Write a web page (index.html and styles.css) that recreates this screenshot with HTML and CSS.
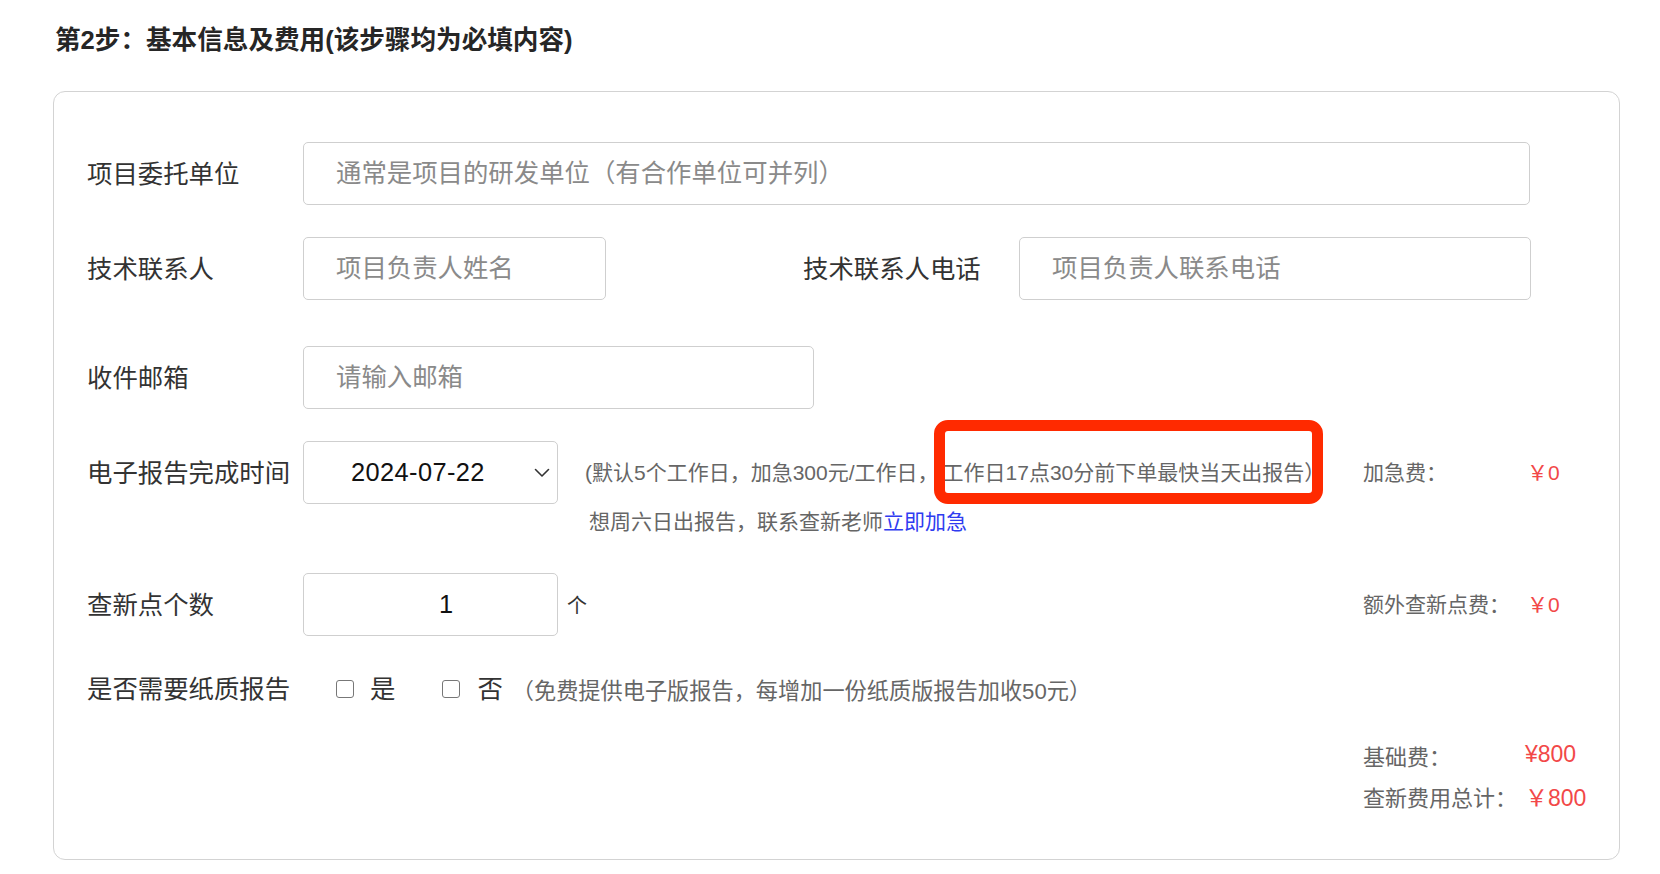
FILE: index.html
```html
<!DOCTYPE html>
<html lang="zh-CN">
<head>
<meta charset="utf-8">
<title>第2步：基本信息及费用</title>
<link rel="stylesheet" href="styles.css">
</head>
<body>
<div class="page">
  <h2 class="step-title">第2步：基本信息及费用(该步骤均为必填内容)</h2>
  <div class="card">
    <div class="row row-1">
      <label class="label">项目委托单位</label>
      <input class="field field-full" type="text" placeholder="通常是项目的研发单位（有合作单位可并列）">
    </div>
    <div class="row row-2">
      <label class="label">技术联系人</label>
      <input class="field field-name" type="text" placeholder="项目负责人姓名">
      <label class="label label-phone">技术联系人电话</label>
      <input class="field field-phone" type="text" placeholder="项目负责人联系电话">
    </div>
    <div class="row row-3">
      <label class="label">收件邮箱</label>
      <input class="field field-email" type="text" placeholder="请输入邮箱">
    </div>
    <div class="row row-4">
      <label class="label label-tall">电子报告完成时间</label>
      <div class="select">
        <span class="select-value">2024-07-22</span>
        <svg class="chevron" viewBox="0 0 16 10" width="16" height="10"><polyline points="1.5,1.5 8,8 14.5,1.5" fill="none" stroke="#333" stroke-width="1.6" stroke-linecap="round" stroke-linejoin="round"/></svg>
      </div>
      <div class="note-block">
        <p class="note-line">(默认5个工作日，加急300元/工作日，<span class="highlight">工作日17点30分前下单最快当天出报告）</span></p>
        <p class="note-line note-line-2">想周六日出报告，联系查新老师<a class="link">立即加急</a></p>
      </div>
      <div class="fee"><span class="fee-label">加急费：</span><span class="fee-value">￥0</span></div>
    </div>
    <div class="row row-5">
      <label class="label">查新点个数</label>
      <input class="field field-count" type="text" value="1">
      <span class="unit">个</span>
      <div class="fee"><span class="fee-label">额外查新点费：</span><span class="fee-value">￥0</span></div>
    </div>
    <div class="row row-6">
      <label class="label">是否需要纸质报告</label>
      <span class="checkbox cb-yes"></span><span class="option">是</span>
      <span class="checkbox cb-no"></span><span class="option">否</span>
      <span class="paper-note">（免费提供电子版报告，每增加一份纸质版报告加收50元）</span>
    </div>
    <div class="summary">
      <div class="summary-line"><span class="fee-label">基础费：</span><span class="fee-value">¥800</span></div>
      <div class="summary-line"><span class="fee-label">查新费用总计：</span><span class="fee-value">￥800</span></div>
    </div>
    <div class="annotation"></div>
  </div>
</div>
</body>
</html>
```
FILE: styles.css
```css
* { box-sizing: border-box; }
html, body { margin: 0; padding: 0; background: #fff; }
body {
  font-family: "Liberation Sans", "Noto Sans CJK SC", sans-serif;
  color: #333;
}
.page { padding: 23px 40px 0 53px; }
.step-title {
  margin: 0 0 0 2px;
  font-size: 25.6px;
  font-weight: 700;
  line-height: 34px;
  color: #262626;
}
.card {
  position: relative;
  width: 1567px;
  margin-top: 34px;
  border: 1px solid #d3d3d3;
  border-radius: 12px;
  padding: 50px 33px 43px 33px;
}
.row { display: flex; align-items: center; }
.label {
  flex: 0 0 216px;
  font-size: 25.4px;
  line-height: 34px;
  color: #333;
}
.field {
  height: 63px;
  border: 1px solid #cfcfcf;
  border-radius: 5px;
  padding: 0 0 0 32px;
  font-family: inherit;
  font-size: 25.4px;
  color: #111;
  background: #fff;
  outline: none;
}
.field::placeholder { color: #8a8a8a; }
.field-full { width: 1227px; }
.row-2 { margin-top: 32px; }
.field-name { width: 303px; }
.label-phone { margin-left: 197px; }
.field-phone { width: 512px; }
.row-3 { margin-top: 46px; }
.field-email { width: 511px; }

.row-4 { margin-top: 32px; align-items: flex-start; }
.label-tall { height: 63px; display: flex; align-items: center; }
.select {
  flex: 0 0 255px;
  height: 63px;
  border: 1px solid #cfcfcf;
  border-radius: 5px;
  display: flex;
  align-items: center;
  justify-content: space-between;
  padding: 0 7px 0 47px;
  font-size: 25.4px;
  color: #111;
}
.select-value { letter-spacing: 0.4px; }
.chevron { display: block; }
.note-block {
  margin-left: 27px;
  padding-top: 17px;
  font-size: 21px;
  color: #666;
  white-space: nowrap;
}
.note-line { margin: 0; line-height: 30px; }
.note-line-2 { margin-top: 19px; padding-left: 4px; }
.highlight { margin-left: 4px; }
.link { color: #2f3cf0; text-decoration: none; }
.fee {
  margin-left: auto;
  flex: 0 0 223px;
  height: 63px;
  padding-bottom: 4px;
  display: flex;
  align-items: center;
  font-size: 21px;
  color: #666;
}
.fee-label { flex: 0 0 164px; }
.fee-value { color: #f24848; }

.row-5 { margin-top: 36px; }
.field-count { width: 255px; text-align: center; padding: 0 0 0 31px; }
.unit { margin-left: 9px; font-size: 20px; color: #333; }

.row-6 { margin-top: 36px; height: 34px; }
.checkbox {
  flex: 0 0 18px;
  width: 18px;
  height: 18px;
  border: 1.5px solid #777;
  border-radius: 3px;
  background: #fff;
}
.cb-yes { margin-left: 33px; }
.cb-no { margin-left: 47px; }
.option { margin-left: 16px; font-size: 25.4px; line-height: 34px; color: #333; }
.cb-no + .option { margin-left: 17px; }
.paper-note { margin-left: 9px; font-size: 22.2px; color: #666; }

.summary {
  margin-top: 28px;
  margin-left: auto;
  width: 223px;
  font-size: 22px;
  color: #666;
}
.summary-line { display: flex; align-items: center; height: 41px; }
.summary .fee-value { font-size: 23px; }
.summary .fee-label { flex-basis: 162px; }

.annotation {
  position: absolute;
  left: 880px;
  top: 328px;
  width: 389px;
  height: 84px;
  border: 11px solid #ff2a00;
  border-radius: 14px;
  pointer-events: none;
}
```
